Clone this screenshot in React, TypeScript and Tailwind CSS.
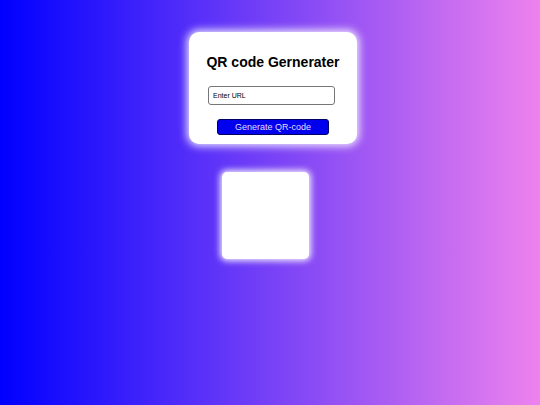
export default function App() {
  return (
    <div className="min-h-screen w-full bg-[linear-gradient(to_right,#0000ff,#ee82ee)] flex flex-col items-center pt-[32px] font-['Liberation_Sans',Arial,sans-serif]">
      <div className="ml-[6px] w-[168px] h-[112px] bg-white rounded-[10px] shadow-[0_0_8px_2px_rgba(255,255,255,0.9)] flex flex-col items-center pt-[21px]">
        <h1 className="text-[14px] leading-[18px] font-bold text-black">QR code Gernerater</h1>
        <input
          placeholder="Enter URL"
          className="mt-[15px] ml-[-3px] w-[127px] h-[19px] border border-[#767676] rounded-[3px] px-[4px] text-[7px] text-black placeholder:text-black outline-none"
        />
        <button className="mt-[14px] w-[112px] h-[16px] bg-[#0000ee] border border-[#000066] rounded-[3px] text-[9px] leading-none text-[#e4dcff]">
          Generate QR-code
        </button>
      </div>
      <div className="mt-[28px] mr-[9px] w-[87px] h-[87px] bg-white rounded-[5px] shadow-[0_0_6px_2px_rgba(255,255,255,0.9)]" />
    </div>
  );
}
